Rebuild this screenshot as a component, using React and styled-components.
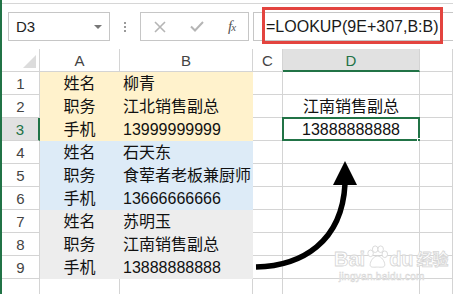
import React from 'react';
import styled, { createGlobalStyle, css } from 'styled-components';

const GREEN = '#217346';
const GRID = '#d4d4d4';

const Global = createGlobalStyle`
  html, body { margin: 0; padding: 0; background: #fff; }
  body { font-family: "Liberation Sans", "Noto Sans CJK SC", sans-serif; }
`;

const Page = styled.div`
  position: relative;
  width: 453px;
  height: 294px;
  overflow: hidden;
  box-sizing: border-box;
  border-left: 2px solid ${GREEN};
  background: #fff;
`;

const FormulaBar = styled.div`
  margin-top: 3px;
  border-top: 1px solid #d6d6d6;
  height: 46px;
  box-sizing: border-box;
  display: flex;
  align-items: flex-start;
  padding: 8px 0 0 6px;
`;

const NameBox = styled.div`
  width: 102px;
  height: 29px;
  box-sizing: border-box;
  border: 1px solid #c6c6c6;
  display: flex;
  align-items: center;
  justify-content: space-between;
  padding: 0 7px;
  font-size: 15px;
  color: #222;
`;

const DropCaret = styled.span`
  width: 0;
  height: 0;
  border-left: 4px solid transparent;
  border-right: 4px solid transparent;
  border-top: 4px solid #777;
`;

const Grip = styled.div`
  width: 30px;
  height: 29px;
  display: flex;
  flex-direction: column;
  align-items: center;
  justify-content: center;
  gap: 2px;
  span {
    width: 2px;
    height: 2px;
    background: #9a9a9a;
  }
`;

const ButtonBox = styled.div`
  width: 109px;
  height: 29px;
  box-sizing: border-box;
  border: 1px solid #c6c6c6;
  display: grid;
  grid-template-columns: 37px 37px 1fr;
  align-items: center;
  justify-items: center;
`;

const Fx = styled.span`
  font-family: "Liberation Serif", serif;
  font-style: italic;
  font-size: 15px;
  color: #555;
  letter-spacing: -1px;
  small { font-size: 11px; }
`;

const FormulaInput = styled.div`
  flex: 1;
  margin-left: 4px;
  height: 29px;
  box-sizing: border-box;
  border: 1px solid #c6c6c6;
  border-right: none;
  display: flex;
  align-items: center;
  padding-left: 12px;
  font-size: 16px;
  color: #1a1a1a;
  white-space: nowrap;
`;

const Highlight = styled.div`
  position: absolute;
  left: 260px;
  top: 7px;
  width: 181px;
  height: 37px;
  box-sizing: border-box;
  border: 3px solid #e3443f;
  pointer-events: none;
`;

const Sheet = styled.div`
  display: grid;
  grid-template-columns: 38px 80px 133px 30px 137px 1fr;
  grid-auto-rows: 23px;
`;

const Cell = styled.div`
  box-sizing: border-box;
  border-right: 1px solid ${p => p.$fill || GRID};
  border-bottom: 1px solid ${p => p.$fill || GRID};
  background: ${p => p.$fill || '#fff'};
  text-align: ${p => (p.$align === 'left' ? 'left' : 'center')};
  padding: ${p => (p.$align === 'left' ? '1px 0 0 3px' : '1px 0 0 0')};
  font-size: 16px;
  line-height: 21px;
  color: #111;
  white-space: nowrap;
  position: relative;
  ${p => p.$overflow && css`
    z-index: 2;
    overflow: visible;
  `}
`;

const SelectionFrame = styled.span`
  position: absolute;
  left: -1px;
  top: -1px;
  right: -1px;
  bottom: -1px;
  border: 2px solid ${GREEN};
  pointer-events: none;
`;

const FillHandle = styled.span`
  position: absolute;
  right: -4px;
  bottom: -4px;
  width: 6px;
  height: 6px;
  background: ${GREEN};
  border: 1px solid #fff;
  box-sizing: border-box;
`;

const HeadCell = styled.div`
  box-sizing: border-box;
  background: ${p => (p.$active ? '#e1e1e1' : '#fff')};
  border-right: ${p => (p.$active && p.$row ? `2px solid ${GREEN}` : `1px solid ${GRID}`)};
  border-bottom: ${p => (p.$active && !p.$row ? `2px solid ${GREEN}` : `1px solid ${GRID}`)};
  display: flex;
  align-items: center;
  justify-content: center;
  font-size: 15px;
  color: ${p => (p.$active ? GREEN : '#444')};
  padding-top: 1px;
`;

const Corner = styled.div`
  box-sizing: border-box;
  border-right: 1px solid ${GRID};
  border-bottom: 1px solid ${GRID};
  position: relative;
  &::after {
    content: '';
    position: absolute;
    right: 3px;
    bottom: 3px;
    width: 0;
    height: 0;
    border-left: 13px solid transparent;
    border-bottom: 13px solid #dcdcdc;
  }
`;

const Overlay = styled.svg`
  position: absolute;
  left: -2px;
  top: 0;
  pointer-events: none;
`;

const Watermark = styled.div`
  position: absolute;
  left: 332px;
  top: 245px;
  width: 110px;
  display: flex;
  flex-direction: column;
  align-items: flex-start;
  color: #fff;
  -webkit-text-stroke: 0.8px #d6d6d6;
  pointer-events: none;
  white-space: nowrap;
`;

const MarkRow = styled.div`
  display: flex;
  align-items: flex-end;
  font-weight: bold;
  font-size: 20px;
  line-height: 24px;
  span.cn { font-size: 16px; margin-left: 3px; line-height: 22px; }
`;

const MarkUrl = styled.div`
  font-size: 10px;
  line-height: 12px;
  -webkit-text-stroke: 0.5px #d4d4d4;
  margin-left: 5px;
  letter-spacing: 0.3px;
`;

const rows = [
  { n: 1, a: '姓名', b: '柳青', fill: '#fff2cc' },
  { n: 2, a: '职务', b: '江北销售副总', fill: '#fff2cc', d: '江南销售副总' },
  { n: 3, a: '手机', b: '13999999999', fill: '#fff2cc', d: '13888888888', sel: true },
  { n: 4, a: '姓名', b: '石天东', fill: '#ddebf7' },
  { n: 5, a: '职务', b: '食荤者老板兼厨师', fill: '#ddebf7', over: true },
  { n: 6, a: '手机', b: '13666666666', fill: '#ddebf7' },
  { n: 7, a: '姓名', b: '苏明玉', fill: '#ededed' },
  { n: 8, a: '职务', b: '江南销售副总', fill: '#ededed' },
  { n: 9, a: '手机', b: '13888888888', fill: '#ededed' },
  { n: 10, hideNum: true },
];

const cols = ['A', 'B', 'C', 'D', ''];

function Paw() {
  return (
    <svg width="22" height="24" viewBox="0 0 24 26" style={{ margin: '0 1px 2px', flexShrink: 0 }}>
      <g fill="#fff" stroke="#d6d6d6" strokeWidth="1">
        <ellipse cx="5" cy="9" rx="3" ry="3.6" />
        <ellipse cx="10" cy="4.5" rx="3" ry="3.6" />
        <ellipse cx="16" cy="4.5" rx="3" ry="3.6" />
        <ellipse cx="20.5" cy="10" rx="3" ry="3.6" />
        <path d="M12.5 12 C8 12 4.5 18 4.5 21.5 C4.5 25 9 24 12.5 24 C16 24 20.5 25 20.5 21.5 C20.5 18 17 12 12.5 12 Z" />
      </g>
    </svg>
  );
}

export default function App() {
  return (
    <>
      <Global />
      <Page>
        <FormulaBar>
          <NameBox>
            <span>D3</span>
            <DropCaret />
          </NameBox>
          <Grip><span /><span /><span /></Grip>
          <ButtonBox>
            <svg width="12" height="12" viewBox="0 0 12 12">
              <path d="M1 1 L11 11 M11 1 L1 11" stroke="#b5b5b5" strokeWidth="1.6" fill="none" />
            </svg>
            <svg width="14" height="11" viewBox="0 0 14 11">
              <path d="M1 5.5 L5 9.5 L13 1" stroke="#b5b5b5" strokeWidth="2" fill="none" />
            </svg>
            <Fx>f<small>x</small></Fx>
          </ButtonBox>
          <FormulaInput>=LOOKUP(9E+307,B:B)</FormulaInput>
        </FormulaBar>
        <Highlight />

        <Sheet>
          <Corner />
          {cols.map((c, i) => (
            <HeadCell key={i} $active={c === 'D'}>{c}</HeadCell>
          ))}
          {rows.map(r => (
            <React.Fragment key={r.n}>
              <HeadCell $row $active={r.sel}>{r.hideNum ? '' : r.n}</HeadCell>
              <Cell $fill={r.fill}>{r.a}</Cell>
              <Cell $fill={r.fill} $align="left" $overflow={r.over}>{r.b}</Cell>
              <Cell />
              <Cell>
                {r.d}
                {r.sel && <SelectionFrame />}
                {r.sel && <FillHandle />}
              </Cell>
              <Cell />
            </React.Fragment>
          ))}
        </Sheet>

        <Watermark>
          <MarkRow>
            <span>Bai</span>
            <Paw />
            <span>du</span>
            <span className="cn">经验</span>
          </MarkRow>
          <MarkUrl>jingyan.baidu.com</MarkUrl>
        </Watermark>

        <Overlay width="453" height="294" viewBox="0 0 453 294">
          <path d="M256 267 C 302 266, 342 242, 345 184" stroke="#000" strokeWidth="5.5" fill="none" />
          <polygon points="345,161 333,185 357,185" fill="#000" />
        </Overlay>
      </Page>
    </>
  );
}
